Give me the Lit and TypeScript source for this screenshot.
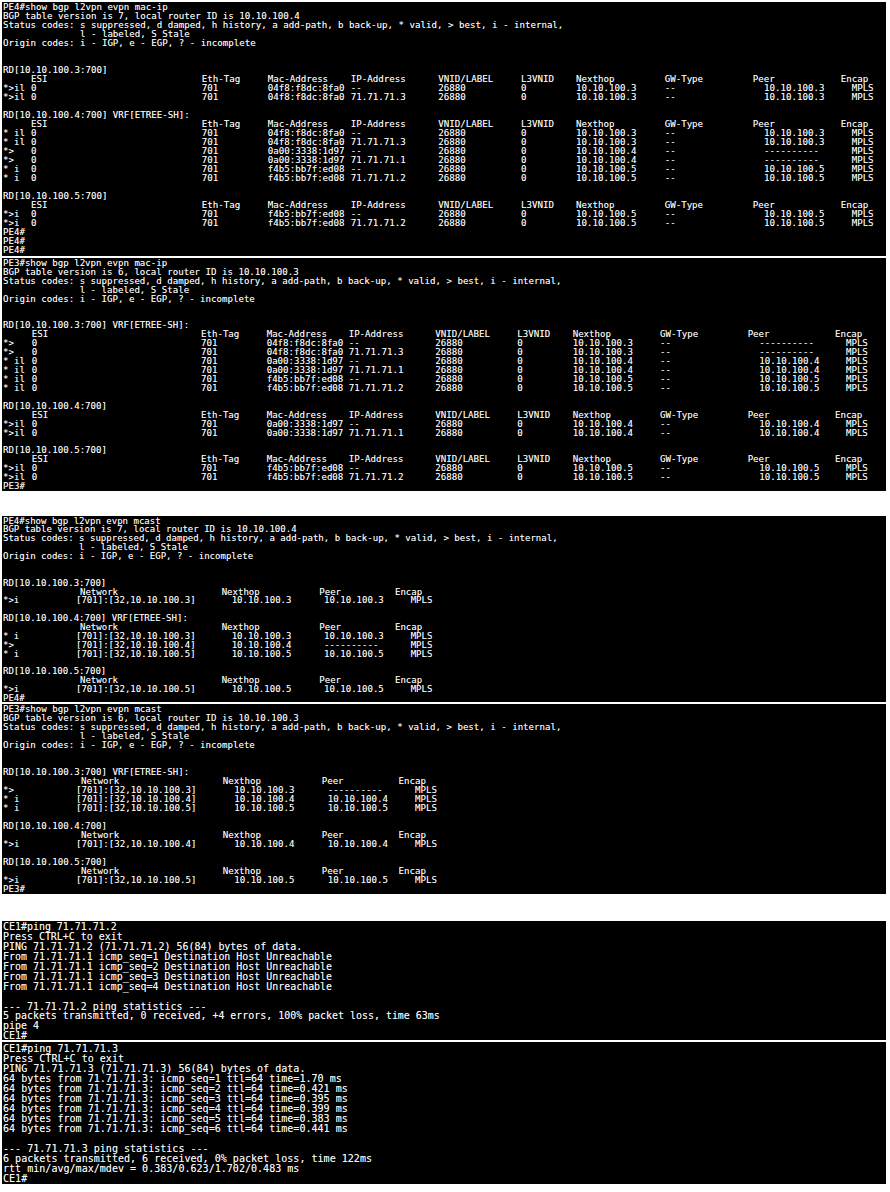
import { LitElement, html, css } from "lit";
import { customElement } from "lit/decorators.js";

type Row = { cells: string[]; at: number[] };
type Line = string | Row;
interface Panel {
  gap: number; height: number; pad: number; font: number; lh: number; lines: Line[];
}

const DASH = "----------";
const M1 = "04f8:f8dc:8fa0", M2 = "0a00:3338:1d97", M3 = "f4b5:bb7f:ed08";
const P3 = "10.10.100.3", P4 = "10.10.100.4", P5 = "10.10.100.5";

function macTable(h: number[], v: number[]) {
  return {
    head: (): Row => ({ cells: ["", "ESI", "Eth-Tag", "Mac-Address", "IP-Address", "VNID/LABEL", "L3VNID", "Nexthop", "GW-Type", "Peer", "Encap"], at: h }),
    row: (st: string, mac: string, ip: string, nh: string, peer: string): Row => ({
      cells: [st, "0", "701", mac, ip, "26880", "0", nh, "--", peer, "MPLS"], at: v,
    }),
  };
}
function mcastTable(h: number[], v: number[]) {
  return {
    head: (): Row => ({ cells: ["Network", "Nexthop", "Peer", "Encap"], at: h }),
    row: (st: string, net: string, nh: string, peer: string): Row => ({
      cells: [st, net, nh, peer, "MPLS"], at: v,
    }),
  };
}
const header = (cmd: string, ver: string, id: string): string[] => [
  cmd,
  `BGP table version is ${ver}, local router ID is ${id}`,
  "Status codes: s suppressed, d damped, h history, a add-path, b back-up, * valid, > best, i - internal,",
  "              l - labeled, S Stale",
  "Origin codes: i - IGP, e - EGP, ? - incomplete",
  "",
  "",
];

const t1 = macTable(
  [3, 31, 201.7, 267.7, 350.7, 438.3, 521, 576, 664.7, 752.7, 840.7],
  [3, 31, 201.7, 267.7, 350.7, 438.3, 521, 576, 664.7, 764, 851.7]
);
const t2 = macTable(
  [3, 31.7, 201, 266.7, 348.7, 435.3, 517.3, 572.7, 660, 747.7, 835],
  [3, 31.7, 201, 266.7, 348.7, 435.3, 517.3, 572.7, 660, 759.3, 846]
);
const t3 = mcastTable([80, 221.7, 319.3, 395], [3, 76, 231.7, 324, 410.7]);
const t4 = mcastTable([81, 222.7, 321.7, 398.5], [3, 76, 234.3, 327.7, 415]);

const PANELS: Panel[] = [
  {
    gap: 2, height: 254, pad: 0.5, font: 9.15, lh: 9,
    lines: [
      ...header("PE4#show bgp l2vpn evpn mac-ip", "7", "10.10.100.4"),
      "RD[10.10.100.3:700]",
      t1.head(),
      t1.row("*>il", M1, "--", P3, P3),
      t1.row("*>il", M1, "71.71.71.3", P3, P3),
      "",
      "RD[10.10.100.4:700] VRF[ETREE-SH]:",
      t1.head(),
      t1.row("* il", M1, "--", P3, P3),
      t1.row("* il", M1, "71.71.71.3", P3, P3),
      t1.row("*>", M2, "--", P4, DASH),
      t1.row("*>", M2, "71.71.71.1", P4, DASH),
      t1.row("* i", M3, "--", P5, P5),
      t1.row("* i", M3, "71.71.71.2", P5, P5),
      "",
      "RD[10.10.100.5:700]",
      t1.head(),
      t1.row("*>i", M3, "--", P5, P5),
      t1.row("*>i", M3, "71.71.71.2", P5, P5),
      "PE4#",
      "PE4#",
      "PE4#",
    ],
  },
  {
    gap: 2, height: 233, pad: 0.8, font: 9.1, lh: 8.94,
    lines: [
      ...header("PE3#show bgp l2vpn evpn mac-ip", "6", "10.10.100.3"),
      "RD[10.10.100.3:700] VRF[ETREE-SH]:",
      t2.head(),
      t2.row("*>", M1, "--", P3, DASH),
      t2.row("*>", M1, "71.71.71.3", P3, DASH),
      t2.row("* il", M2, "--", P4, P4),
      t2.row("* il", M2, "71.71.71.1", P4, P4),
      t2.row("* il", M3, "--", P5, P5),
      t2.row("* il", M3, "71.71.71.2", P5, P5),
      "",
      "RD[10.10.100.4:700]",
      t2.head(),
      t2.row("*>il", M2, "--", P4, P4),
      t2.row("*>il", M2, "71.71.71.1", P4, P4),
      "",
      "RD[10.10.100.5:700]",
      t2.head(),
      t2.row("*>il", M3, "--", P5, P5),
      t2.row("*>il", M3, "71.71.71.2", P5, P5),
      "PE3#",
    ],
  },
  {
    gap: 25, height: 186, pad: 0.5, font: 9.04, lh: 8.89,
    lines: [
      ...header("PE4#show bgp l2vpn evpn mcast", "7", "10.10.100.4"),
      "RD[10.10.100.3:700]",
      t3.head(),
      t3.row("*>i", "[701]:[32,10.10.100.3]", P3, P3),
      "",
      "RD[10.10.100.4:700] VRF[ETREE-SH]:",
      t3.head(),
      t3.row("* i", "[701]:[32,10.10.100.3]", P3, P3),
      t3.row("*>", "[701]:[32,10.10.100.4]", P4, DASH),
      t3.row("* i", "[701]:[32,10.10.100.5]", P5, P5),
      "",
      "RD[10.10.100.5:700]",
      t3.head(),
      t3.row("*>i", "[701]:[32,10.10.100.5]", P5, P5),
      "PE4#",
    ],
  },
  {
    gap: 2, height: 190, pad: 0.5, font: 9.1, lh: 9,
    lines: [
      ...header("PE3#show bgp l2vpn evpn mcast", "6", "10.10.100.3"),
      "RD[10.10.100.3:700] VRF[ETREE-SH]:",
      t4.head(),
      t4.row("*>", "[701]:[32,10.10.100.3]", P3, DASH),
      t4.row("* i", "[701]:[32,10.10.100.4]", P4, P4),
      t4.row("* i", "[701]:[32,10.10.100.5]", P5, P5),
      "",
      "RD[10.10.100.4:700]",
      t4.head(),
      t4.row("*>i", "[701]:[32,10.10.100.4]", P4, P4),
      "",
      "RD[10.10.100.5:700]",
      t4.head(),
      t4.row("*>i", "[701]:[32,10.10.100.5]", P5, P5),
      "PE3#",
    ],
  },
  {
    gap: 27, height: 119, pad: 1, font: 9.95, lh: 9.94,
    lines: [
      "CE1#ping 71.71.71.2",
      "Press CTRL+C to exit",
      "PING 71.71.71.2 (71.71.71.2) 56(84) bytes of data.",
      "From 71.71.71.1 icmp_seq=1 Destination Host Unreachable",
      "From 71.71.71.1 icmp_seq=2 Destination Host Unreachable",
      "From 71.71.71.1 icmp_seq=3 Destination Host Unreachable",
      "From 71.71.71.1 icmp_seq=4 Destination Host Unreachable",
      "",
      "--- 71.71.71.2 ping statistics ---",
      "5 packets transmitted, 0 received, +4 errors, 100% packet loss, time 63ms",
      "pipe 4",
      "CE1#",
    ],
  },
  {
    gap: 2, height: 142, pad: 1.5, font: 10.05, lh: 10.05,
    lines: [
      "CE1#ping 71.71.71.3",
      "Press CTRL+C to exit",
      "PING 71.71.71.3 (71.71.71.3) 56(84) bytes of data.",
      "64 bytes from 71.71.71.3: icmp_seq=1 ttl=64 time=1.70 ms",
      "64 bytes from 71.71.71.3: icmp_seq=2 ttl=64 time=0.421 ms",
      "64 bytes from 71.71.71.3: icmp_seq=3 ttl=64 time=0.395 ms",
      "64 bytes from 71.71.71.3: icmp_seq=4 ttl=64 time=0.399 ms",
      "64 bytes from 71.71.71.3: icmp_seq=5 ttl=64 time=0.383 ms",
      "64 bytes from 71.71.71.3: icmp_seq=6 ttl=64 time=0.441 ms",
      "",
      "--- 71.71.71.3 ping statistics ---",
      "6 packets transmitted, 6 received, 0% packet loss, time 122ms",
      "rtt min/avg/max/mdev = 0.383/0.623/1.702/0.483 ms",
      "CE1#",
    ],
  },
];

@customElement("app-root")
export class AppRoot extends LitElement {
  static styles = css`
    :host { display: block; width: 890px; height: 1192px; background: #fff; overflow: hidden; }
    .page { display: flex; flex-direction: column; padding-left: 2px; }
    .panel {
      width: 884px; box-sizing: border-box; background: #000; color: #f5f5f5;
      padding-left: 1px; overflow: hidden; flex: none;
      font-family: "DejaVu Sans Mono", "Liberation Mono", monospace;
      text-shadow: 0 0 0.5px rgba(255, 255, 255, 0.55);
    }
    .line { white-space: pre; height: var(--lh); line-height: var(--lh); }
    .row { display: flex; height: var(--lh); line-height: var(--lh); }
    .cell { white-space: pre; flex: none; }
  `;

  private renderRow(r: Row) {
    const first = r.at[0];
    const lead = first - 3;
    return html`<div class="row">
      ${lead > 0 ? html`<span class="cell" style="width:${lead}px"></span>` : ""}
      ${r.cells.map((c, i) => {
        const next = r.at[i + 1];
        return html`<span class="cell" style=${next !== undefined ? `width:${next - r.at[i]}px` : ""}>${c}</span>`;
      })}
    </div>`;
  }

  render() {
    return html`<div class="page">
      ${PANELS.map(
        (p) => html`<section
          class="panel"
          style="margin-top:${p.gap}px;height:${p.height}px;padding-top:${p.pad}px;font-size:${p.font}px;--lh:${p.lh}px"
        >
          ${p.lines.map((l) =>
            typeof l === "string" ? html`<div class="line">${l}</div>` : this.renderRow(l)
          )}
        </section>`
      )}
    </div>`;
  }
}
